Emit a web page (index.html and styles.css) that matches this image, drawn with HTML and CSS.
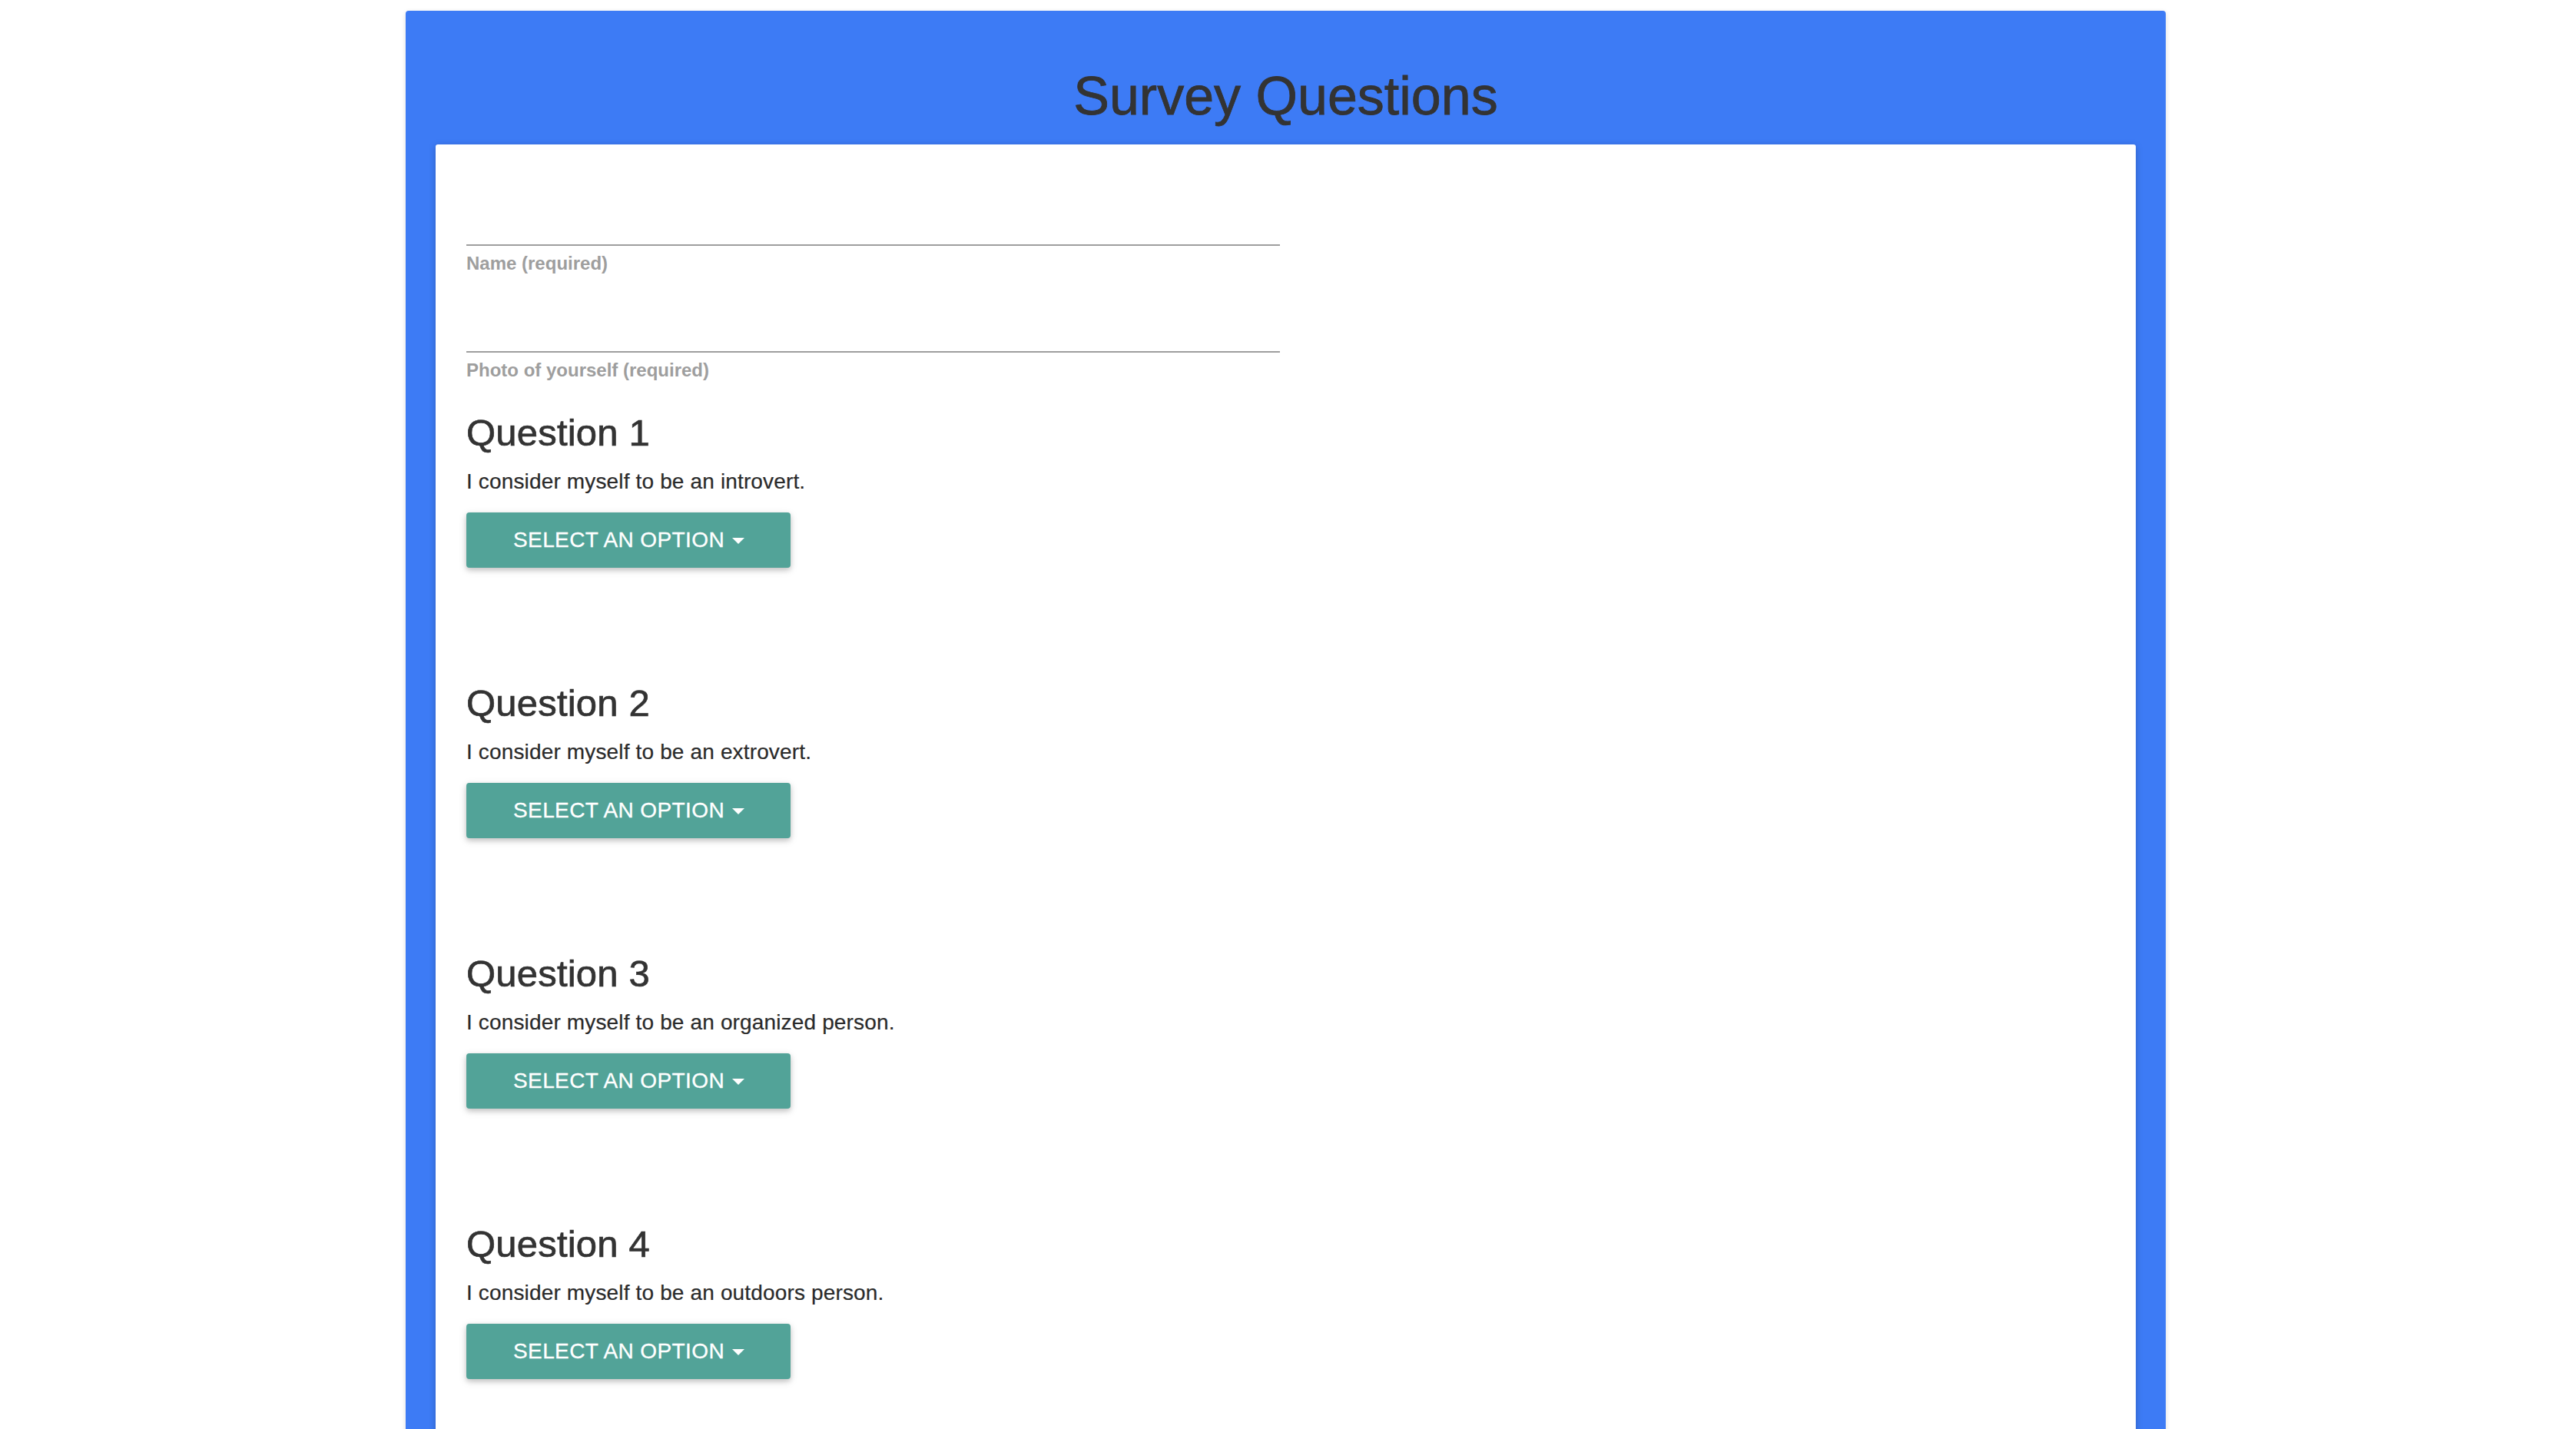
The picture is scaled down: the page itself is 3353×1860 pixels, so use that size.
FILE: index.html
```html
<!DOCTYPE html>
<html lang="en">
<head>
<meta charset="utf-8">
<title>Survey Questions</title>
<link rel="stylesheet" href="styles.css">
</head>
<body>
<div class="panel">
  <h1 class="title">Survey Questions</h1>
  <div class="card">
    <div class="fields">
      <div class="field">
        <div class="input"></div>
        <label class="label">Name (required)</label>
      </div>
      <div class="field">
        <div class="input"></div>
        <label class="label">Photo of yourself (required)</label>
      </div>
    </div>
    <div class="questions">
      <div class="question">
        <h4 class="q-title">Question 1</h4>
        <p class="q-text">I consider myself to be an introvert.</p>
        <button class="btn">SELECT AN OPTION<span class="caret"></span></button>
      </div>
      <div class="question">
        <h4 class="q-title">Question 2</h4>
        <p class="q-text">I consider myself to be an extrovert.</p>
        <button class="btn">SELECT AN OPTION<span class="caret"></span></button>
      </div>
      <div class="question">
        <h4 class="q-title">Question 3</h4>
        <p class="q-text">I consider myself to be an organized person.</p>
        <button class="btn">SELECT AN OPTION<span class="caret"></span></button>
      </div>
      <div class="question">
        <h4 class="q-title">Question 4</h4>
        <p class="q-text">I consider myself to be an outdoors person.</p>
        <button class="btn">SELECT AN OPTION<span class="caret"></span></button>
      </div>
    </div>
  </div>
</div>
</body>
</html>
```
FILE: styles.css
```css
html, body {
  margin: 0;
  padding: 0;
  background: #ffffff;
}
body {
  font-family: "Liberation Sans", Arial, Helvetica, sans-serif;
  color: #333333;
  padding-top: 14px;
  overflow: hidden;
  height: 1860px;
  box-sizing: border-box;
}
.panel {
  width: 2291px;
  margin-left: 528px;
  background: #3d7bf5;
  border-radius: 4px 4px 0 0;
  box-shadow: 0 2px 6px rgba(0, 0, 0, 0.14);
  padding: 0 39px 200px;
  box-sizing: border-box;
}
.title {
  margin: 0;
  padding-top: 73px;
  padding-bottom: 24px;
  font-size: 70px;
  line-height: 77px;
  font-weight: 400;
  text-align: center;
  color: #333333;
  -webkit-text-stroke: 0.8px #333333;
}
.card {
  background: #ffffff;
  border-radius: 3px 3px 0 0;
  box-shadow: 0 2px 10px rgba(0, 0, 0, 0.22);
  padding: 30px 40px 400px;
}
.fields {
  width: 1059px;
  display: flex;
  flex-direction: column;
}
.field {
  display: flex;
  flex-direction: column;
}
.input {
  height: 100px;
  border-bottom: 2px solid #9e9e9e;
}
.label {
  margin-top: 9px;
  font-size: 24px;
  line-height: 28px;
  font-weight: 700;
  color: #9e9e9e;
}
.questions {
  margin-top: 40px;
  display: flex;
  flex-direction: column;
  gap: 149px;
}
.question {
  display: flex;
  flex-direction: column;
  align-items: flex-start;
}
.q-title {
  margin: 0;
  font-size: 49px;
  line-height: 54px;
  font-weight: 400;
  letter-spacing: 0.2px;
  color: #333333;
  -webkit-text-stroke: 0.7px #333333;
}
.q-text {
  margin: 21px 0 0;
  font-size: 28px;
  line-height: 32px;
  letter-spacing: 0.15px;
  color: #2a2a2a;
  -webkit-text-stroke: 0.2px #2a2a2a;
}
.btn {
  margin-top: 24px;
  height: 72px;
  padding: 0 60px 0 61px;
  border: none;
  border-radius: 4px;
  background: #52a398;
  color: #ffffff;
  font-family: "Liberation Sans", Arial, Helvetica, sans-serif;
  font-size: 28px;
  line-height: 72px;
  font-weight: 400;
  letter-spacing: 0.4px;
  -webkit-text-stroke: 0.3px #ffffff;
  display: flex;
  align-items: center;
  box-shadow: 0 3px 6px rgba(0, 0, 0, 0.16), 0 3px 12px rgba(0, 0, 0, 0.12);
}
.caret {
  display: inline-block;
  width: 0;
  height: 0;
  margin-left: 10px;
  margin-top: 2px;
  border-left: 8px solid transparent;
  border-right: 8px solid transparent;
  border-top: 8px solid #ffffff;
}
```
